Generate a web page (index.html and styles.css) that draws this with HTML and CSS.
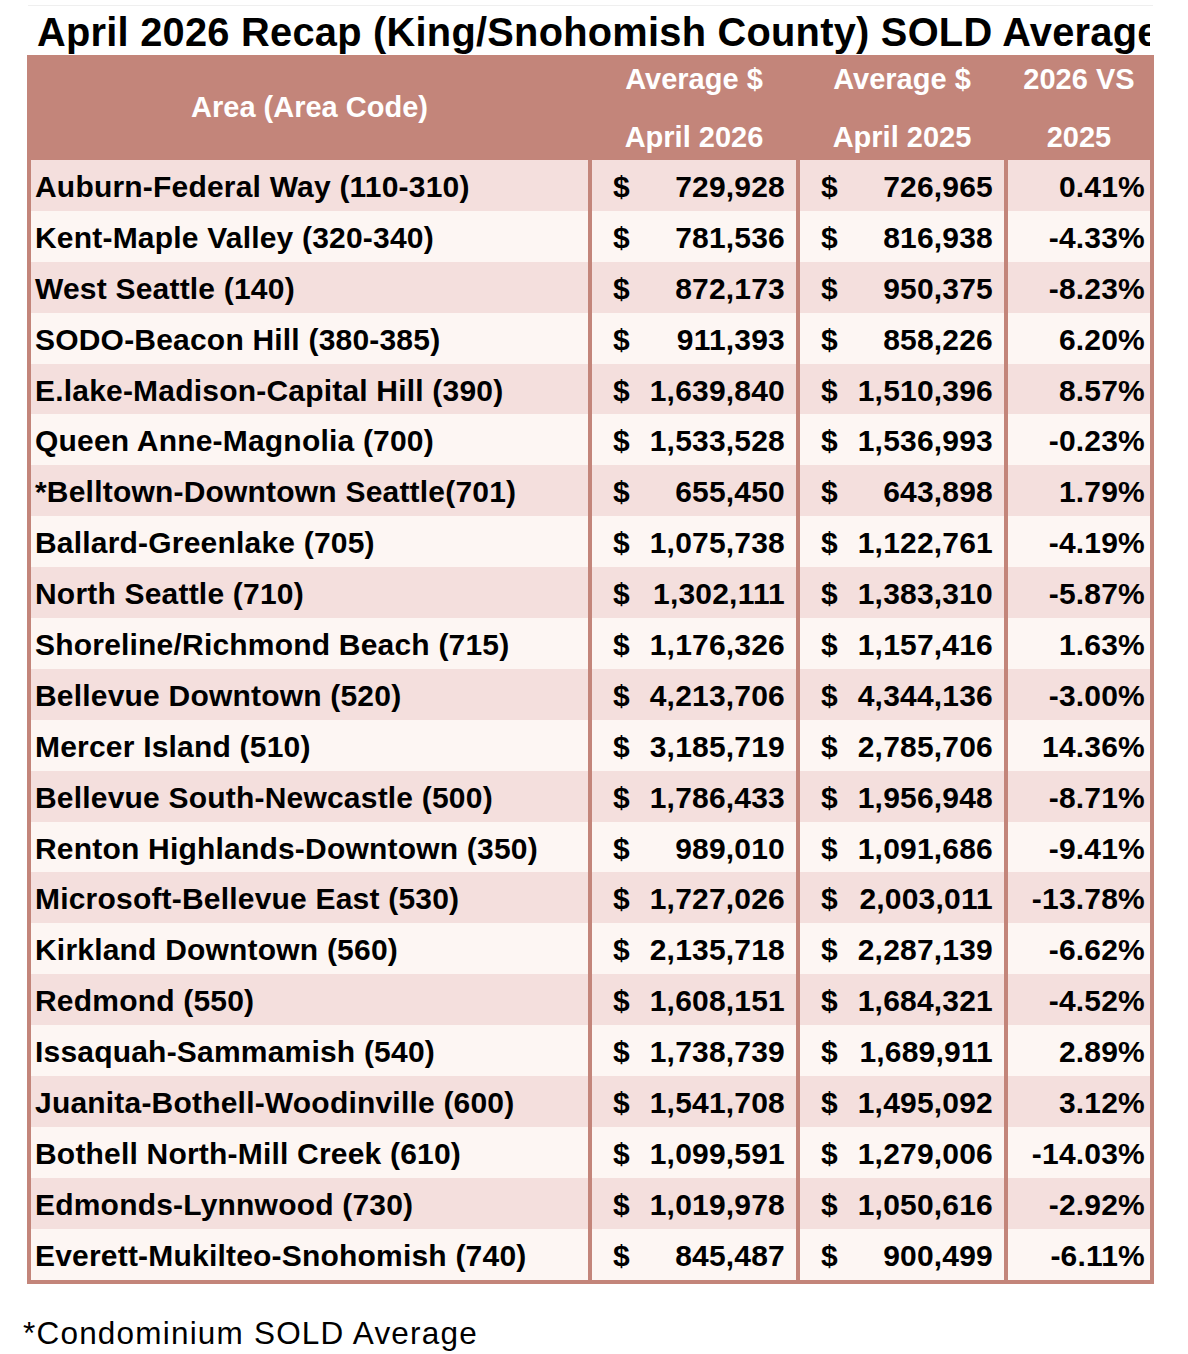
FILE: index.html
```html
<!DOCTYPE html>
<html lang="en">
<head>
<meta charset="utf-8">
<title>April 2026 Recap</title>
<link rel="stylesheet" href="styles.css">
</head>
<body>
<div class="sheet">
  <div class="topline"></div>
  <h1 class="title">April 2026 Recap (King/Snohomish County) SOLD Average</h1>
  <div class="grid">
    <div class="hd hd-area">Area (Area Code)</div>
    <div class="hd"><span>Average $</span><span>April 2026</span></div>
    <div class="hd"><span>Average $</span><span>April 2025</span></div>
    <div class="hd"><span>2026 VS</span><span>2025</span></div>
  </div>
</div>
<p class="note">*Condominium SOLD Average</p>
<script>
const rows = [
["Auburn-Federal Way (110-310)","729,928","726,965","0.41%"],
["Kent-Maple Valley (320-340)","781,536","816,938","-4.33%"],
["West Seattle (140)","872,173","950,375","-8.23%"],
["SODO-Beacon Hill (380-385)","911,393","858,226","6.20%"],
["E.lake-Madison-Capital Hill (390)","1,639,840","1,510,396","8.57%"],
["Queen Anne-Magnolia (700)","1,533,528","1,536,993","-0.23%"],
["*Belltown-Downtown Seattle(701)","655,450","643,898","1.79%"],
["Ballard-Greenlake (705)","1,075,738","1,122,761","-4.19%"],
["North Seattle (710)","1,302,111","1,383,310","-5.87%"],
["Shoreline/Richmond Beach (715)","1,176,326","1,157,416","1.63%"],
["Bellevue Downtown (520)","4,213,706","4,344,136","-3.00%"],
["Mercer Island (510)","3,185,719","2,785,706","14.36%"],
["Bellevue South-Newcastle (500)","1,786,433","1,956,948","-8.71%"],
["Renton Highlands-Downtown (350)","989,010","1,091,686","-9.41%"],
["Microsoft-Bellevue East (530)","1,727,026","2,003,011","-13.78%"],
["Kirkland Downtown (560)","2,135,718","2,287,139","-6.62%"],
["Redmond (550)","1,608,151","1,684,321","-4.52%"],
["Issaquah-Sammamish (540)","1,738,739","1,689,911","2.89%"],
["Juanita-Bothell-Woodinville (600)","1,541,708","1,495,092","3.12%"],
["Bothell North-Mill Creek (610)","1,099,591","1,279,006","-14.03%"],
["Edmonds-Lynnwood (730)","1,019,978","1,050,616","-2.92%"],
["Everett-Mukilteo-Snohomish (740)","845,487","900,499","-6.11%"]
];
const grid = document.querySelector('.grid');
rows.forEach((r, i) => {
  const cls = i % 2 === 0 ? 'odd' : 'even';
  const a = document.createElement('div');
  a.className = 'cell area ' + cls;
  a.textContent = r[0];
  grid.appendChild(a);
  [r[1], r[2]].forEach(v => {
    const c = document.createElement('div');
    c.className = 'cell money ' + cls;
    const d = document.createElement('span');
    d.textContent = '$';
    const n = document.createElement('span');
    n.textContent = v;
    c.appendChild(d); c.appendChild(n);
    grid.appendChild(c);
  });
  const p = document.createElement('div');
  p.className = 'cell pct ' + cls;
  p.textContent = r[3];
  grid.appendChild(p);
});
</script>
</body>
</html>
```

FILE: styles.css
```css
html, body {
  margin: 0;
  padding: 0;
  background: #ffffff;
}
body {
  font-family: "Liberation Sans", Arial, sans-serif;
  color: #000;
}
.sheet {
  margin-left: 27px;
  width: 1127px;
}
.topline {
  height: 1px;
  margin: 5px 1px 0 1px;
  background: #efefef;
}
.title {
  margin: 0;
  width: 1123px;
  height: 49px;
  padding: 4px 0 0 10px;
  box-sizing: border-box;
  overflow: hidden;
  white-space: nowrap;
  font-size: 39.8px;
  letter-spacing: 0.25px;
  font-weight: bold;
  line-height: 45px;
}
.grid {
  display: grid;
  grid-template-columns: 557px 204px 204px 142px;
  grid-template-rows: 105px;
  grid-auto-rows: 50.9px;
  column-gap: 4px;
  padding: 0 4px 4px 4px;
  background: #c3857a;
}
.hd {
  box-sizing: border-box;
  display: flex;
  flex-direction: column;
  align-items: center;
  color: #fff;
  font-weight: bold;
  font-size: 29px;
  line-height: 34px;
  padding-top: 7px;
}
.hd span + span {
  margin-top: 24px;
}
.hd-area {
  justify-content: center;
  padding-top: 0;
  padding-bottom: 2px;
}
.cell {
  box-sizing: border-box;
  font-weight: bold;
  font-size: 30px;
  line-height: 46px;
  padding-top: 4px;
  white-space: nowrap;
  letter-spacing: 0.2px;
}
.odd { background: #f4dfdd; }
.even { background: #fdf6f3; }
.area {
  padding-left: 4px;
}
.money {
  display: flex;
  justify-content: space-between;
  padding-left: 21px;
  padding-right: 11px;
}
.pct {
  text-align: right;
  padding-right: 5px;
}
.note {
  margin: 31px 0 0 23px;
  font-size: 31.5px;
  letter-spacing: 1.2px;
  line-height: 36px;
}
```
